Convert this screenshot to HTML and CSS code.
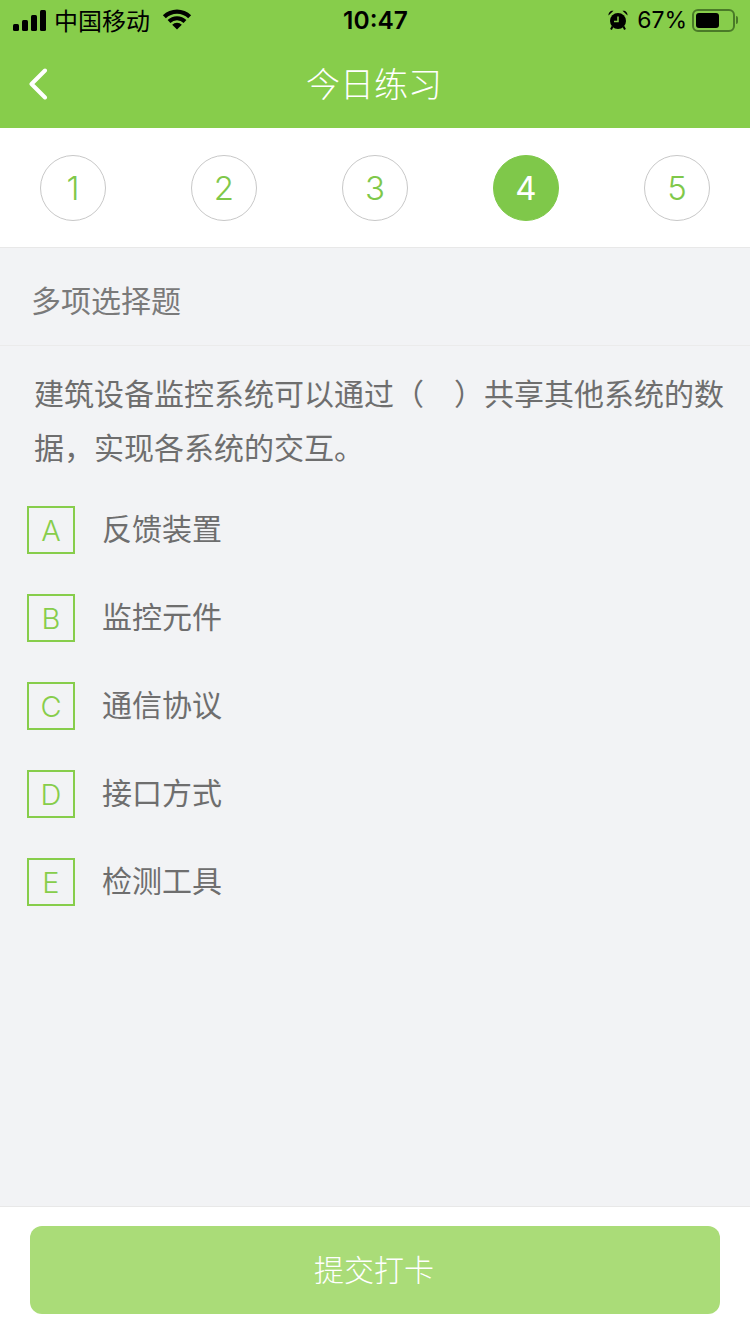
FILE: index.html
```html
<!DOCTYPE html>
<html lang="zh-CN">
<head>
<meta charset="utf-8">
<title>今日练习</title>
<link rel="stylesheet" href="styles.css">
</head>
<body>
<div class="page">
  <header class="head">
    <div class="status">
      <div class="status-left">
        <svg class="signal" width="33" height="21" viewBox="0 0 33 21"><rect x="0" y="14" width="6" height="7" rx="1.500"/><rect x="9" y="10" width="6" height="11" rx="1.500"/><rect x="18" y="5" width="6" height="16" rx="1.500"/><rect x="27" y="0" width="6" height="21" rx="1.500"/></svg>
        <span class="carrier">中国移动</span>
        <svg class="wifi" width="30" height="22" viewBox="0 0 30 22"><path d="M0.860 6.360A20 20 0 0 1 29.140 6.360L26.170 9.330A15.800 15.800 0 0 0 3.830 9.330Z"/><path d="M5.600 11.100A13.300 13.300 0 0 1 24.400 11.100L21.580 13.920A9.300 9.300 0 0 0 8.420 13.920Z"/><path d="M10.200 15.700A6.800 6.800 0 0 1 19.800 15.700L15 20.500Z"/></svg>
      </div>
      <div class="clock">10:47</div>
      <div class="status-right">
        <svg class="alarm" width="20" height="20" viewBox="0 0 20 20"><circle cx="10" cy="11" r="8"/><path d="M0.500 5.500C0.300 2.500 2.500 0.300 5.500 0.700ZM19.500 5.500C19.700 2.500 17.500 0.300 14.500 0.700Z"/><path d="M4.500 16.500L3 19.500M15.500 16.500L17 19.500" class="alarm-leg"/><path d="M10 6.500V11.500H6" class="alarm-hand"/></svg>
        <span class="percent">67%</span>
        <div class="battery"><div class="battery-body"><div class="battery-fill"></div></div><div class="battery-cap"></div></div>
      </div>
    </div>
    <nav class="nav">
      <svg class="back" width="20" height="32" viewBox="0 0 20 32"><path d="M17 2.500L3.500 16L17 29.500"/></svg>
      <h1 class="title">今日练习</h1>
    </nav>
  </header>

  <div class="steps">
    <div class="step">1</div>
    <div class="step">2</div>
    <div class="step">3</div>
    <div class="step step-current">4</div>
    <div class="step">5</div>
  </div>

  <main class="body">
    <div class="type">多项选择题</div>
    <p class="question">建筑设备监控系统可以通过（　）共享其他系统的数据，实现各系统的交互。</p>
    <ul class="options">
      <li class="option"><span class="key">A</span><span class="label">反馈装置</span></li>
      <li class="option"><span class="key">B</span><span class="label">监控元件</span></li>
      <li class="option"><span class="key">C</span><span class="label">通信协议</span></li>
      <li class="option"><span class="key">D</span><span class="label">接口方式</span></li>
      <li class="option"><span class="key">E</span><span class="label">检测工具</span></li>
    </ul>
  </main>

  <footer class="foot">
    <button class="submit" type="button">提交打卡</button>
  </footer>
</div>
</body>
</html>
```
FILE: styles.css
```css
* { box-sizing: border-box; }
html, body { margin: 0; padding: 0; }
body {
  font-family: "Noto Sans CJK SC", "Noto Sans", sans-serif;
  background: #f2f3f5;
}
.page {
  width: 750px;
  height: 1334px;
  display: flex;
  flex-direction: column;
  overflow: hidden;
}
.head { background: #87cd4b; height: 128px; flex: none; }
.status {
  height: 40px;
  display: grid;
  grid-template-columns: 1fr auto 1fr;
  align-items: center;
  padding: 0 12px 0 13px;
  color: #000;
}
.status-left, .status-right { display: flex; align-items: center; }
.status-right { justify-content: flex-end; }
.signal { fill: #000; margin-right: 8px; }
.carrier { font-size: 24px; line-height: 40px; }
.wifi { fill: #000; margin-left: 12px; }
.clock {
  font-family: Inter, "Liberation Sans", sans-serif;
  font-size: 24.500px;
  font-weight: 600;
  line-height: 40px;
}
.alarm { fill: #000; margin-right: 9px; }
.alarm-leg { stroke: #000; stroke-width: 2; fill: none; }
.alarm-hand { stroke: #87cd4b; stroke-width: 1.500; fill: none; }
.percent {
  font-family: Inter, "Liberation Sans", sans-serif;
  font-size: 23px;
  line-height: 40px;
  margin-right: 5px;
}
.battery { display: flex; align-items: center; }
.battery-body {
  width: 43px;
  height: 23px;
  border: 2px solid #4a7a28;
  border-radius: 6px;
  padding: 2px;
}
.battery-fill { width: 67%; height: 100%; background: #000; border-radius: 3px; }
.battery-cap { width: 2px; height: 8px; margin-left: 1px; background: #4a7a28; border-radius: 0 2px 2px 0; }
.nav {
  height: 88px;
  position: relative;
  display: flex;
  align-items: center;
  justify-content: center;
  padding: 0 2px 2px 0;
}
.back {
  position: absolute;
  left: 28px;
  top: 28px;
  fill: none;
  stroke: #fff;
  stroke-width: 4;
  stroke-linecap: round;
  stroke-linejoin: round;
}
.title {
  margin: 0;
  font-size: 34px;
  font-weight: 300;
  line-height: 86px;
  color: #fff;
}
.steps {
  flex: none;
  height: 120px;
  background: #fff;
  border-bottom: 1px solid #e8e8e8;
  padding: 27px 40px 0;
  display: flex;
  justify-content: space-between;
  align-items: flex-start;
}
.step {
  width: 66px;
  height: 66px;
  border: 1px solid #c8c8c8;
  border-radius: 50%;
  color: #7fc84a;
  font-family: Inter, "Liberation Sans", sans-serif;
  font-size: 33px;
  font-weight: 350;
  line-height: 64px;
  text-align: center;
}
.step-current {
  background: #7fc84a;
  border-color: #7fc84a;
  color: #fff;
  font-weight: 400;
}
.body { flex: 1; min-height: 0; }
.type {
  height: 98px;
  padding-left: 31px;
  border-bottom: 1px solid #ebebeb;
  font-size: 30px;
  font-weight: 400;
  line-height: 102px;
  color: #7a7a7a;
}
.question {
  margin: 0;
  padding: 19px 25px 0 34px;
  font-size: 30px;
  font-weight: 400;
  line-height: 54px;
  color: #6e6e6e;
}
.options {
  list-style: none;
  margin: 33px 0 0;
  padding: 0 0 0 27px;
  display: flex;
  flex-direction: column;
  gap: 40px;
}
.option { display: flex; align-items: center; height: 48px; }
.key {
  width: 48px;
  height: 48px;
  border: 2px solid #87cd4b;
  color: #87cd4b;
  font-family: Inter, "Liberation Sans", sans-serif;
  font-size: 29px;
  font-weight: 350;
  line-height: 46px;
  text-align: center;
  flex: none;
}
.label {
  margin-left: 27px;
  padding-bottom: 6px;
  font-size: 30px;
  font-weight: 400;
  line-height: 48px;
  color: #6e6e6e;
}
.foot {
  flex: none;
  height: 128px;
  background: #fff;
  border-top: 1px solid #e8e8e8;
  padding: 19px 30px 0;
}
.submit {
  display: block;
  width: 100%;
  height: 88px;
  padding: 0 2px 4px 0;
  border: 0;
  border-radius: 12px;
  background: #aadc78;
  color: #fff;
  font-family: inherit;
  font-size: 30px;
  font-weight: 300;
}
```
